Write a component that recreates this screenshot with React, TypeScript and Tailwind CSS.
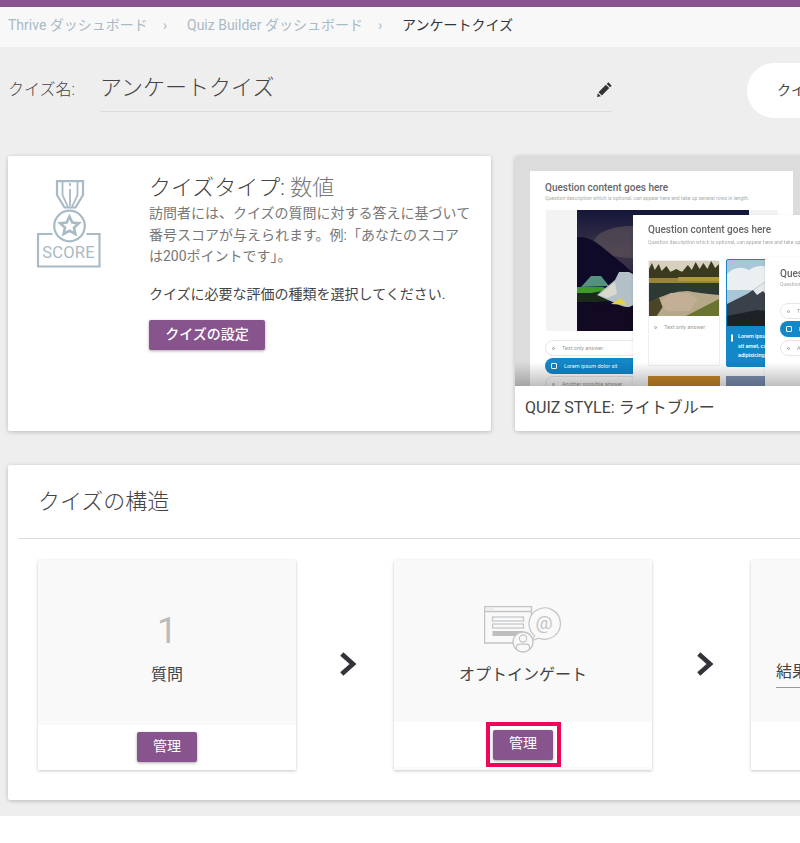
import React from "react";

const FONT = { fontFamily: '"Roboto", "Noto Sans CJK JP", sans-serif' };

function Medal() {
  return (
    <svg width="66" height="90" viewBox="0 0 66 90" fill="none" stroke="#a8bac5" strokeWidth="2.2">
      <path d="M21 1.2 H47 V15 L39.5 27.5 H28.5 L21 15 Z" />
      <path d="M26.5 2 V15 L32 27 M41.5 2 V15 L36 27 M34 9 V26 M34 3 V6" strokeWidth="1.8" />
      <circle cx="33.5" cy="46" r="15.3" />
      <path d="M33.5 36.5 L36.3 42.5 L42.9 43.2 L38 47.6 L39.4 54 L33.5 50.8 L27.6 54 L29 47.6 L24.1 43.2 L30.7 42.5 Z" strokeWidth="2.6" />
      <path d="M16.5 54 H2 V86.5 H63.5 V54 H50.5" />
      <text x="32.5" y="78" textAnchor="middle" fontFamily="Roboto, sans-serif" fontSize="16.5" fill="#a8bac5" stroke="none" letterSpacing="0.2">SCORE</text>
    </svg>
  );
}

function OptinIcon() {
  return (
    <svg width="78" height="48" viewBox="0 0 78 48" fill="none" stroke="#c2c4c5" strokeWidth="1.2">
      <path d="M40 37 H0.6 V0.6 H47.5 V14" strokeWidth="1.3" />
      <path d="M1 5.5 H47.5" strokeWidth="1.3" />
      <path d="M2.5 3 h1 M5 3 h1 M7.5 3 h1" />
      <rect x="8.5" y="11" width="31" height="4" />
      <rect x="8.5" y="18" width="31" height="4" />
      <rect x="8.5" y="25" width="31" height="5" fill="#bcbebf" stroke="none" />
      <path d="M48 34.5 L50.5 29.5 A15.7 15.7 0 1 1 55 32.2 Z" fill="#f9f9f9" />
      <text x="60" y="23" textAnchor="middle" fontFamily="Roboto, sans-serif" fontSize="19" fill="#c2c4c5" stroke="none">@</text>
      <circle cx="39" cy="36" r="10" fill="#f9f9f9" strokeWidth="1.3" />
      <circle cx="39" cy="32.5" r="3.6" />
      <path d="M32.5 43 V40.5 Q32.5 38.2 36 38.2 H42 Q45.5 38.2 45.5 40.5 V43" />
    </svg>
  );
}

function Chevron() {
  return (
    <svg width="17" height="24" viewBox="0 0 17 24" fill="none" stroke="#33343a" strokeWidth="4.6" strokeLinecap="square" strokeLinejoin="miter">
      <path d="M3.5 3.5 L13 12 L3.5 20.5" />
    </svg>
  );
}

function Pencil() {
  return (
    <svg width="15" height="15" viewBox="0 0 14 14" fill="#333333">
      <path d="M10.6 0.3 L13.7 3.4 L12.2 4.9 L9.1 1.8 Z M8.3 2.6 L11.4 5.7 L4.6 12.6 L1.4 9.5 Z M0.8 10.4 L3.6 13.2 L0 14 Z" />
    </svg>
  );
}

function NightPhoto() {
  return (
    <svg className="w-full h-full block" viewBox="0 0 172 121" preserveAspectRatio="none">
      <defs>
        <linearGradient id="sky" x1="0" y1="0" x2="0" y2="1">
          <stop offset="0" stopColor="#14163a" />
          <stop offset="0.35" stopColor="#3c3548" />
          <stop offset="0.7" stopColor="#2c2640" />
        </linearGradient>
      </defs>
      <rect width="172" height="121" fill="url(#sky)" />
      <ellipse cx="55" cy="32" rx="38" ry="16" fill="#5a5058" opacity="0.7" />
      <path d="M0 27 Q12 26 24 36 Q36 46 46 54 Q52 60 60 66 L172 80 V121 H0 Z" fill="#0f0a28" />
      <path d="M0 78 H36 L44 90 L20 92 H0 Z" fill="#1b2a18" />
      <path d="M0 77 H26 L32 80 L14 83 H0 Z" fill="#3f9a2c" />
      <path d="M4 77 L14 66 L24 66 L32 76 Z" fill="#56907e" />
      <path d="M20 85 L38 70 L42 62 L52 62 L60 66 L72 88 L50 98 L40 94 Z" fill="#b4c0c8" />
      <path d="M22 85 L38 72 L40 84 L30 88 Z" fill="#d9d8cc" />
      <path d="M34 94 L44 88 L50 95 Z" fill="#e2cf4a" />
      <path d="M0 92 L40 96 L80 100 V121 H0 Z" fill="#120a22" />
    </svg>
  );
}

function LakePhoto() {
  return (
    <svg className="w-full h-full block" viewBox="0 0 72 55" preserveAspectRatio="none">
      <rect width="72" height="55" fill="#b5a98a" />
      <rect width="72" height="10" fill="#d6d0bd" />
      <path d="M0 8 L3 2 L6 9 L10 3 L13 10 L18 5 L22 11 L28 8 L34 11 L40 4 L44 9 L48 1 L52 8 L56 2 L60 8 L64 0 L68 7 L72 3 V24 H0 Z" fill="#3a3a1f" />
      <path d="M0 17 H72 V23 H0 Z" fill="#9a8436" />
      <path d="M30 16 H72 V20 H30 Z" fill="#b09a3e" />
      <path d="M0 22 H72 V34 Q50 32 40 30 Q20 30 0 42 Z" fill="#2d3a33" />
      <path d="M10 42 L22 32 L40 32 L50 38 L42 50 H18 Z" fill="#c3ae96" />
      <path d="M0 42 L10 36 L14 46 L8 55 H0 Z" fill="#4a4526" />
      <path d="M38 55 L72 38 V55 Z" fill="#6a7330" />
    </svg>
  );
}

function PeakPhoto() {
  return (
    <svg className="w-full h-full block" viewBox="0 0 70 66" preserveAspectRatio="none">
      <rect width="70" height="66" fill="#a9c6d6" />
      <path d="M0 14 Q10 4 22 10 Q34 2 46 10 T70 8 V30 H0 Z" fill="#eaf0f2" />
      <path d="M0 44 L20 34 L38 22 L52 26 L70 42 V66 H0 Z" fill="#3a414b" />
      <path d="M26 30 L38 22 L52 26 L60 33 L48 32 L42 38 L36 31 L30 35 Z" fill="#e4e9ec" />
      <path d="M0 56 L30 50 L70 54 V66 H0 Z" fill="#1d2227" />
    </svg>
  );
}

function AnswerDot({ blue }: { blue?: boolean }) {
  return blue ? (
    <span className="w-[6px] h-[6px] rounded-[1px] border border-white shrink-0" />
  ) : (
    <span className="w-[3px] h-[3px] rounded-full border border-gray-400 shrink-0" />
  );
}

function Pill({ text, blue, className }: { text: string; blue?: boolean; className: string }) {
  return (
    <div
      className={
        "absolute h-[16px] rounded-full flex items-center gap-[7px] pl-[6px] text-[5.5px] whitespace-nowrap overflow-hidden " +
        (blue ? "bg-[#1387c8] text-white " : "bg-white border border-[#e6e6e6] text-[#999] ") +
        className
      }
    >
      <AnswerDot blue={blue} />
      {text}
    </div>
  );
}

function Preview() {
  return (
    <div className="relative h-[230px] bg-[#dcdcdc] overflow-hidden">
      <div className="absolute inset-0 blur-[0.4px]">
        {/* first slide */}
        <div className="absolute left-[15px] top-[15px] w-[263px] h-[240px] bg-white">
          <p className="absolute left-[15px] top-[9px] text-[10px] font-medium text-[#666] whitespace-nowrap">Question content goes here</p>
          <p className="absolute left-[15px] top-[24px] text-[5.1px] text-[#aaa] whitespace-nowrap">Question description which is optional, can appear here and take up several rows in length.</p>
          <div className="absolute left-[16px] top-[39px] w-[232px] h-[121px] bg-[#f3f3f3] rounded-[2px]">
            <div className="ml-[31px] w-[172px] h-full">
              <NightPhoto />
            </div>
          </div>
        </div>
        <Pill text="Text only answer" className="left-[30px] top-[184px] w-[120px]" />
        <Pill text="Lorem ipsum dolor sit" blue className="left-[30px] top-[202px] w-[120px]" />
        <Pill text="Another possible answer" className="left-[30px] top-[220px] w-[120px]" />

        {/* second slide */}
        <div className="absolute left-[118px] top-[59px] w-[260px] h-[180px] bg-white shadow-sm">
          <p className="absolute left-[15px] top-[7px] text-[10px] font-medium text-[#666] whitespace-nowrap">Question content goes here</p>
          <p className="absolute left-[15px] top-[24px] text-[5.1px] text-[#aaa] whitespace-nowrap">Question description which is optional, can appear here and take up several rows in length.</p>
          <div className="absolute left-[15px] top-[45px] w-[72px] h-[106px] rounded-[2px] border border-[#eee] bg-white">
            <div className="h-[55px]">
              <LakePhoto />
            </div>
            <div className="flex items-center gap-[7px] pl-[5px] pt-[7px] text-[5.5px] text-[#999] whitespace-nowrap">
              <AnswerDot />
              Text only answer
            </div>
          </div>
          <div className="absolute left-[93px] top-[44px] w-[72px] h-[108px] rounded-[2px] border border-[#1387c8] bg-[#1387c8] overflow-hidden">
            <div className="h-[66px]">
              <PeakPhoto />
            </div>
            <div className="flex gap-[5px] pl-[4px] pt-[6px] text-[5.5px] leading-[9.5px] font-medium text-white whitespace-nowrap">
              <span className="mt-[2px]">
                <AnswerDot blue />
              </span>
              <span>
                Lorem ipsum
                <br />
                sit amet, co
                <br />
                adipisicing
              </span>
            </div>
          </div>
          <div className="absolute left-[15px] top-[161px] w-[72px] h-[20px] bg-[#c98a2a]" />
          <div className="absolute left-[93px] top-[161px] w-[72px] h-[20px] bg-[#7f93b5]" />
        </div>

        {/* third slide */}
        <div className="absolute left-[250px] top-[101px] w-[120px] h-[140px] bg-white shadow-sm">
          <p className="absolute left-[15px] top-[9px] text-[10px] font-medium text-[#666] whitespace-nowrap">Question content</p>
          <p className="absolute left-[15px] top-[24px] text-[5.1px] text-[#aaa] whitespace-nowrap">Question description</p>
        </div>
        <Pill text="Text" className="left-[265px] top-[147px] w-[60px]" />
        <Pill text="Lorem" blue className="left-[265px] top-[165px] w-[60px]" />
        <Pill text="Another" className="left-[265px] top-[184px] w-[60px]" />
      </div>

      {/* fade at the bottom of the picture */}
      <div className="absolute left-0 right-0 bottom-0 h-[24px] bg-gradient-to-b from-transparent to-[#00000040]" />
    </div>
  );
}

function PurpleButton({ children }: { children: React.ReactNode }) {
  return (
    <button className="w-[60px] h-[30px] pb-[2px] rounded-[2px] bg-[#87548e] text-white text-[14px] shadow-[0_1px_3px_rgba(0,0,0,0.35)]">
      {children}
    </button>
  );
}

export default function App() {
  return (
    <div style={FONT} className="w-[800px] h-[843px] overflow-hidden bg-white">
      <div className="h-[816px] bg-[#eeeeee] overflow-hidden">
        <div className="h-[7px] bg-[#87548e]" />

        <nav className="h-[40px] pb-[3px] bg-[#f8f8f8] flex items-center pl-[8px] text-[14px] whitespace-nowrap">
          <span className="text-[#a9bac6] w-[155px]">Thrive ダッシュボード</span>
          <span className="text-[#a9bac6] w-[24px]">›</span>
          <span className="text-[#a9bac6] w-[191px]">Quiz Builder ダッシュボード</span>
          <span className="text-[#a9bac6] w-[24px]">›</span>
          <span className="text-[#33343a]">アンケートクイズ</span>
        </nav>

        <div className="flex items-start pl-[8px] pt-[16px] h-[109px] w-[1100px]">
          <span className="w-[92px] text-[16px] font-light text-[#444] pt-[15px]">クイズ名:</span>
          <div className="w-[512px] h-[49px] border-b border-[#dddddd] flex items-start justify-between">
            <span className="text-[22px] leading-[50px] font-light text-[#444]">アンケートクイズ</span>
            <span className="pt-[19px]">
              <Pencil />
            </span>
          </div>
          <div className="ml-[135px] w-[200px] h-[55px] rounded-full bg-white flex items-center pl-[30px] text-[14px] text-[#444] whitespace-nowrap">
            クイズをプレビュー
          </div>
        </div>

        <div className="flex gap-[24px] pl-[8px] w-[1000px]">
          <section className="w-[483px] h-[275px] bg-white rounded-[2px] shadow-[0_1px_4px_rgba(0,0,0,0.22)] flex">
            <div className="w-[141px] pl-[28px] pt-[24px] shrink-0">
              <Medal />
            </div>
            <div className="pt-[18px] w-[325px]">
              <h2 className="text-[22px] leading-[28px] font-light text-[#444]">
                クイズタイプ: <span className="text-[#777]">数値</span>
              </h2>
              <p className="text-[14px] leading-[21.5px] text-[#777] mt-[1px] whitespace-nowrap">
                訪問者には、クイズの質問に対する答えに基づいて
                <br />
                番号スコアが与えられます。例:「あなたのスコア
                <br />
                は200ポイントです」。
              </p>
              <p className="text-[14px] leading-[21px] text-[#444] mt-[16px] whitespace-nowrap">
                クイズに必要な評価の種類を選択してください.
              </p>
              <button className="mt-[15px] w-[116px] h-[30px] pb-[1px] rounded-[2px] bg-[#87548e] text-white text-[14px] font-medium shadow-[0_1px_3px_rgba(0,0,0,0.35)]">
                クイズの設定
              </button>
            </div>
          </section>

          <section className="w-[400px] h-[275px] bg-white rounded-[2px] shadow-[0_1px_4px_rgba(0,0,0,0.22)] overflow-hidden">
            <Preview />
            <p className="pl-[10px] pt-[11px] text-[16px] leading-[22px] text-[#444]">QUIZ STYLE: ライトブルー</p>
          </section>
        </div>

        <section className="ml-[8px] mt-[34px] w-[1000px] h-[335px] bg-white rounded-[2px] shadow-[0_1px_4px_rgba(0,0,0,0.22)] pl-[10px]">
          <h2 className="h-[74px] pl-[20px] flex items-center border-b border-[#dddddd] text-[22px] font-light text-[#444]">クイズの構造</h2>
          <div className="flex pl-[20px] pt-[21px]">
            <article className="w-[258px] h-[210px] bg-white shrink-0 flex flex-col shadow-[0_1px_3px_rgba(0,0,0,0.22)]">
              <div className="h-[165px] bg-[#f9f9f9] flex flex-col items-center">
                <span className="mt-[51px] h-[40px] text-[36px] leading-[40px] text-[#bbbbbb]">1</span>
                <span className="mt-[12px] text-[16px] leading-[24px] text-[#444]">質問</span>
              </div>
              <div className="flex justify-center pt-[7px]">
                <PurpleButton>管理</PurpleButton>
              </div>
            </article>

            <div className="w-[98px] shrink-0 flex items-center justify-center pb-[3px] pl-[7px]">
              <Chevron />
            </div>

            <article className="w-[258px] h-[210px] bg-[#f9f9f9] shrink-0 flex flex-col shadow-[0_1px_3px_rgba(0,0,0,0.22)]">
              <div className="h-[162px] flex flex-col items-center">
                <span className="mt-[46px] h-[48px]">
                  <OptinIcon />
                </span>
                <span className="mt-[9px] text-[16px] leading-[24px] text-[#444]">オプトインゲート</span>
              </div>
              <div className="h-[45px] bg-white flex justify-center">
                <div className="w-[75px] h-[45px] border-[4px] border-[#f0055a] bg-white flex items-center justify-center">
                  <PurpleButton>管理</PurpleButton>
                </div>
              </div>
            </article>

            <div className="w-[99px] shrink-0 flex items-center justify-center pb-[3px] pl-[7px]">
              <Chevron />
            </div>

            <article className="w-[258px] h-[210px] bg-white shrink-0 flex flex-col shadow-[0_1px_3px_rgba(0,0,0,0.22)]">
              <div className="h-[162px] bg-[#f9f9f9] pl-[25px] pt-[100px]">
                <span className="inline-block w-[120px] h-[28px] border-b border-[#999] text-[16px] leading-[24px] text-[#444]">結果ページ</span>
              </div>
            </article>
          </div>
        </section>
      </div>
    </div>
  );
}
